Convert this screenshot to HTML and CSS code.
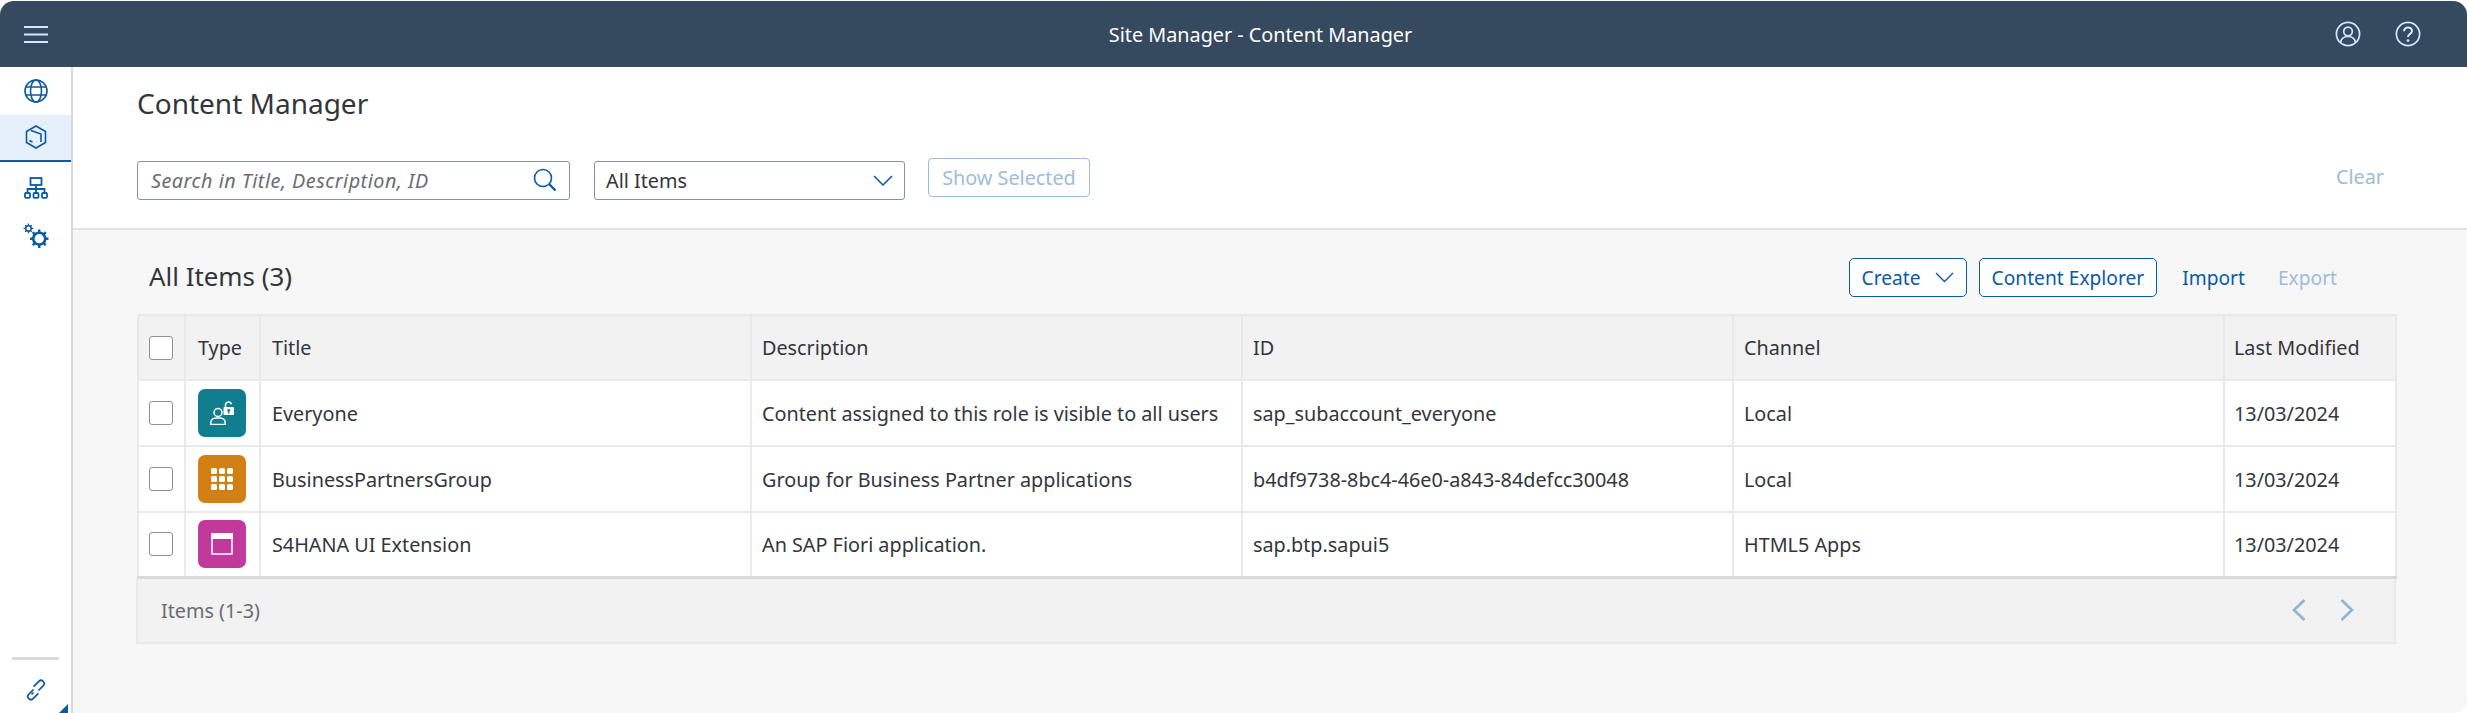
FILE: index.html
```html
<!DOCTYPE html>
<html lang="en">
<head>
<meta charset="utf-8">
<title>Site Manager - Content Manager</title>
<link rel="stylesheet" href="styles.css">
</head>
<body>
<div class="app">
  <header class="shell">
    <button class="shell-btn menu" aria-label="Menu">
      <svg width="24" height="18" viewBox="0 0 24 18"><path d="M0 2h24M0 9.500h24M0 17h24" stroke="#d1e8ff" stroke-width="2.200" fill="none"/></svg>
    </button>
    <div class="shell-title">Site Manager - Content Manager</div>
    <div class="shell-actions">
      <svg class="shell-icon" width="26" height="26" viewBox="0 0 26 26" fill="none" stroke="#d1e8ff" stroke-width="1.700"><circle cx="13" cy="13" r="11.600"/><circle cx="13" cy="10.500" r="4.300"/><path d="M5.600 21.500c.6-3.800 3.600-6 7.400-6s6.800 2.200 7.400 6"/></svg>
      <svg class="shell-icon" width="26" height="26" viewBox="0 0 26 26" fill="none" stroke="#d1e8ff" stroke-width="1.700"><circle cx="13" cy="13" r="11.600"/><path d="M9 10.200c0-2.400 1.800-3.800 4-3.800s4 1.400 4 3.500c0 3-4 3-4 6.100" stroke-width="2"/><circle cx="13" cy="19.600" r="1.400" fill="#d1e8ff" stroke="none"/></svg>
    </div>
  </header>
  <div class="body">
    <nav class="side">
      <a class="side-item">
        <svg width="24" height="24" viewBox="0 0 24 24" fill="none" stroke="#0a5aa4" stroke-width="1.600"><circle cx="12" cy="12" r="11"/><ellipse cx="12" cy="12" rx="5.500" ry="11"/><path d="M2 8h20M2 16h20"/></svg>
      </a>
      <a class="side-item active">
        <svg width="22" height="24" viewBox="0 0 22 24" fill="none" stroke="#0a5aa4" stroke-width="1.600"><path d="M11 1l9.500 5.500v11L11 23l-9.500-5.500v-11z"/><path d="M6 5.500l10 3.500v8M4.500 15.500l3 1.500"/></svg>
      </a>
      <a class="side-item">
        <svg width="24" height="22" viewBox="0 0 24 22" fill="none" stroke="#0a5aa4" stroke-width="1.800"><rect x="6.500" y="1" width="11" height="7"/><path d="M12 8v4M3.500 16v-4h17v4M12 12v4"/><rect x="1" y="16" width="5" height="4.800" rx="1"/><rect x="9.500" y="16" width="5" height="4.800" rx="1"/><rect x="18" y="16" width="5" height="4.800" rx="1"/></svg>
      </a>
      <a class="side-item">
        <svg width="26" height="26" viewBox="0 0 24 24" fill="none" stroke="#0a5aa4"><circle cx="15" cy="14.500" r="5.500" stroke-width="2.400"/><path d="M15 6v3M15 20v3M6.500 14.500h3M20.500 14.500h3M9 8.500l2 2M19 18.500l2 2M9 20.500l2-2M19 10.500l2-2" stroke-width="2.200"/><circle cx="5" cy="5" r="2.500" stroke-width="1.400"/><path d="M5 .5v2M5 7.500v2M.5 5h2M7.500 5h2M2 2l1.200 1.200M6.800 6.800L8 8M2 8l1.200-1.200M6.800 3.200L8 2" stroke-width="1.200"/></svg>
      </a>
      <div class="side-spacer"></div>
      <div class="side-rule"></div>
      <a class="side-item side-link">
        <svg width="22" height="22" viewBox="0 0 22 22" fill="none" stroke="#0a5aa4" stroke-width="1.700"><path d="M8.500 10.500l-4.800 4.800a3 3 0 0 0 0 4.200l.2.200a3 3 0 0 0 4.200 0l5.300-5.300"/><path d="M13.500 11.500l4.800-4.800a3 3 0 0 0 0-4.200l-.2-.2a3 3 0 0 0-4.200 0L8.600 7.600"/><path d="M8.500 13.500L6.500 15.500"/></svg>
      </a>
    </nav>
    <main class="content">
      <section class="page-head">
        <h1 class="page-title">Content Manager</h1>
        <div class="filters">
          <div class="field search">
            <span class="placeholder">Search in Title, Description, ID</span>
            <svg width="24" height="24" viewBox="0 0 24 24" fill="none" stroke="#0a5aa4" stroke-width="1.600"><circle cx="10" cy="10" r="8.500"/><path d="M16 16l6.500 6.500" stroke-width="2.400"/></svg>
          </div>
          <div class="field select">
            <span>All Items</span>
            <svg width="20" height="11" viewBox="0 0 20 11" fill="none" stroke="#0a5aa4" stroke-width="1.500"><path d="M1 1l9 9 9-9"/></svg>
          </div>
          <button class="btn-disabled">Show Selected</button>
          <button class="clear">Clear</button>
        </div>
      </section>
      <section class="list">
        <div class="toolbar">
          <h2 class="list-title">All Items (3)</h2>
          <div class="actions">
            <button class="btn create">Create
              <svg width="19" height="11" viewBox="0 0 19 11" fill="none" stroke="#0a5aa4" stroke-width="1.400"><path d="M1 1l8.500 8.500L18 1"/></svg>
            </button>
            <button class="btn">Content Explorer</button>
            <button class="link">Import</button>
            <button class="link off">Export</button>
          </div>
        </div>
        <table class="grid">
          <colgroup>
            <col class="c-check"><col class="c-type"><col class="c-wide"><col class="c-wide"><col class="c-wide"><col class="c-wide"><col class="c-date">
          </colgroup>
          <thead>
            <tr><th><span class="check"></span></th><th>Type</th><th>Title</th><th>Description</th><th>ID</th><th>Channel</th><th>Last Modified</th></tr>
          </thead>
          <tbody>
            <tr>
              <td><span class="check"></span></td>
              <td><span class="tile teal"><svg width="24" height="24" viewBox="0 0 24 24" fill="none" stroke="#fff" stroke-width="1.500"><circle cx="8" cy="11.500" r="4"/><path d="M.8 23.500V22c0-3 2.200-5 5-5h4.400c2.800 0 5 2 5 5v1.500z"/><path d="M15.500 6.500V4a3 3 0 0 1 5.900-.8"/><rect x="13.500" y="6" width="10.500" height="8" rx="1" fill="#fff" stroke="none"/><circle cx="18.750" cy="9.300" r="1.400" fill="#107e8e" stroke="none"/><rect x="18.100" y="9.500" width="1.300" height="3" fill="#107e8e" stroke="none"/></svg></span></td>
              <td>Everyone</td><td>Content assigned to this role is visible to all users</td><td>sap_subaccount_everyone</td><td>Local</td><td>13/03/2024</td>
            </tr>
            <tr>
              <td><span class="check"></span></td>
              <td><span class="tile orange"><svg width="22" height="22" viewBox="0 0 22 22" fill="#fff"><rect x="0" y="0" width="6" height="6" rx="1.500"/><rect x="8" y="0" width="6" height="6" rx="1.500"/><rect x="16" y="0" width="6" height="6" rx="1.500"/><rect x="0" y="8" width="6" height="6" rx="1.500"/><rect x="8" y="8" width="6" height="6" rx="1.500"/><rect x="16" y="8" width="6" height="6" rx="1.500"/><rect x="0" y="16" width="6" height="6" rx="1.500"/><rect x="8" y="16" width="6" height="6" rx="1.500"/><rect x="16" y="16" width="6" height="6" rx="1.500"/></svg></span></td>
              <td>BusinessPartnersGroup</td><td>Group for Business Partner applications</td><td>b4df9738-8bc4-46e0-a843-84defcc30048</td><td>Local</td><td>13/03/2024</td>
            </tr>
            <tr>
              <td><span class="check"></span></td>
              <td><span class="tile magenta"><svg width="22" height="22" viewBox="0 0 22 22"><path d="M1 1h20v20H1z" fill="none" stroke="#fff" stroke-width="1.500"/><path d="M0 0h22v6H0z" fill="#fff"/></svg></span></td>
              <td>S4HANA UI Extension</td><td>An SAP Fiori application.</td><td>sap.btp.sapui5</td><td>HTML5 Apps</td><td>13/03/2024</td>
            </tr>
          </tbody>
        </table>
        <div class="pager">
          <span class="count">Items (1-3)</span>
          <div class="pager-nav">
            <svg width="14" height="22" viewBox="0 0 14 22" fill="none" stroke="#8db4d9" stroke-width="2.600"><path d="M12.500 1L2 11l10.500 10"/></svg>
            <svg width="14" height="22" viewBox="0 0 14 22" fill="none" stroke="#8db4d9" stroke-width="2.600"><path d="M1.500 1L12 11 1.500 21"/></svg>
          </div>
        </div>
      </section>
    </main>
  </div>
</div>
</body>
</html>
```
FILE: styles.css
```css
* { box-sizing: border-box; }
html, body { margin: 0; height: 100%; background: #fff; }
body { font-family: "Noto Sans", "Open Sans", sans-serif; font-size: 19.800px; color: #32363a; }
button { font: inherit; background: none; border: 0; padding: 0; }
.app { height: 100vh; padding-top: 1px; display: flex; flex-direction: column; }
.shell { height: 66px; flex: none; background: #354a5f; border-radius: 14px 14px 0 0; display: flex; align-items: center; position: relative; padding: 0 24px; }
.shell-btn { display: flex; }
.shell-title { position: absolute; left: 54px; right: 0; text-align: center; color: #fff; font-size: 19.800px; }
.shell-actions { margin-left: auto; display: flex; gap: 34px; position: relative; padding-right: 22px; }
.shell-icon { display: block; }
.body { flex: 1; display: flex; min-height: 0; }
.side { width: 73px; flex: none; background: #fff; border-right: 2px solid #d9d9d9; display: flex; flex-direction: column; border-bottom-left-radius: 14px; position: relative; }
.side-item { height: 47.500px; display: flex; align-items: center; justify-content: center; flex: none; }
.side-item.active { background: #e5f0fa; border-bottom: 2px solid #0a5aa4; }
.side-item:nth-child(3) { padding-top: 5px; }
.side-item:nth-child(4) { padding-top: 5px; }
.side-spacer { flex: 1; }
.side-rule { height: 3px; background: #d9d9d9; margin: 0 12px 9px; }
.side-link { height: 44px; padding-bottom: 2px; }
.side::after { content: ""; position: absolute; right: 3px; bottom: 0; width: 0; height: 0; border-style: solid; border-width: 0 0 9px 9px; border-color: transparent transparent #0a5aa4 transparent; }
.content { flex: 1; min-width: 0; background: #f7f7f7; display: flex; flex-direction: column; border-bottom-right-radius: 14px; }
.page-head { height: 163px; flex: none; background: #fff; border-bottom: 2px solid #e2e2e2; padding: 17px 83px 0 64px; }
.page-title { margin: 0; font-size: 28px; font-weight: 400; line-height: 38px; }
.filters { display: flex; align-items: center; margin-top: 35px; height: 46px; }
.field { height: 39px; background: #fff; border: 1px solid #89919a; border-radius: 3px; display: flex; align-items: center; justify-content: space-between; padding: 0 12px 0 13px; margin-right: 24px; }
.search { width: 433px; }
.placeholder { font-style: italic; color: #6a6d70; letter-spacing: .5px; }
.select { width: 311px; padding: 0 11px 0 11px; margin-right: 23px; }
.btn-disabled { height: 39px; width: 162px; margin-top: -5px; border: 1px solid #9dbcdb; border-radius: 4px; color: #9dbcdb; background: #fff; white-space: nowrap; }
.clear { margin-left: auto; color: #9dbcdb; margin-top: -7px; }
.list { padding: 0 72px 0 64px; }
.toolbar { height: 84px; display: flex; align-items: center; justify-content: space-between; padding: 11px 58px 0 12px; }
.list-title { margin: -4px 0 0; font-size: 25.900px; font-weight: 400; }
.actions { display: flex; align-items: center; font-size: 19.200px; }
.btn { height: 39px; padding: 0 12px; border: 1px solid #0a5aa4; border-radius: 5px; background: #fff; color: #0a5aa4; display: flex; align-items: center; gap: 11px; margin-right: 11px; }
.create { gap: 14px; margin-right: 12px; }
.link { color: #0a5aa4; margin: 0 0 0 14px; }
.link.off { color: #9dbcdb; margin: 0 0 0 33px; }
.grid { width: 2258px; table-layout: fixed; border-collapse: collapse; background: #fff; border: 2px solid #e9e9e9; }
.c-check { width: 47px; }
.c-type { width: 75px; }
.c-wide { width: 491px; }
.c-date { width: 172px; }
.grid th, .grid td { height: 66px; padding: 0 10px 0 10px; border: 2px solid #e9e9e9; text-align: left; font-weight: 400; white-space: nowrap; overflow: hidden; }
.grid th { height: 65px; background: #f2f2f2; }
.grid th:first-child, .grid td:first-child { padding: 0 0 0 10px; }
.grid th:nth-child(2), .grid td:nth-child(2) { padding: 0 0 0 12px; }
.grid th:nth-child(3), .grid td:nth-child(3) { padding-left: 11px; }
.grid th:last-child, .grid td:last-child { padding-left: 9px; }
.grid tbody tr:last-child td { height: 65px; border-bottom: 3px solid #d9d9d9; }
.check { display: block; width: 24px; height: 24px; background: #fff; border: 1px solid #89919a; border-radius: 3px; }
.tile { display: flex; align-items: center; justify-content: center; width: 48px; height: 48px; border-radius: 7px; }
.teal { background: #107e8e; }
.orange { background: #d27f14; }
.magenta { background: #c13a9b; }
.pager { height: 65px; width: 2260px; margin-left: -1px; background: #f2f2f2; border: 2px solid #e9e9e9; border-top: 0; display: flex; align-items: center; justify-content: space-between; padding: 0 40px 0 23px; }
.count { color: #6a6d70; }
.pager-nav { display: flex; gap: 34px; }
```
